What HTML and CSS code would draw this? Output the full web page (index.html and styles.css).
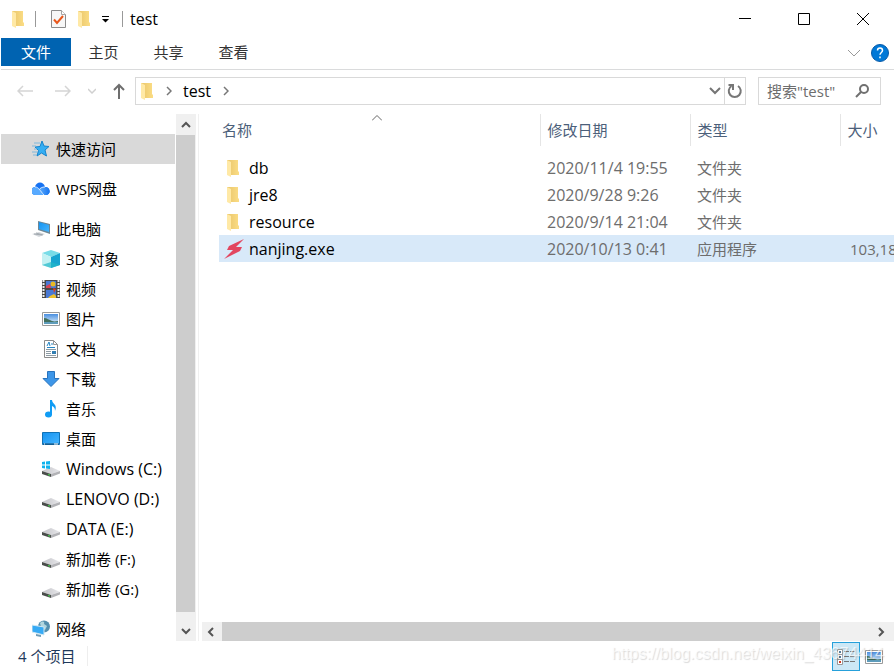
FILE: index.html
```html
<!DOCTYPE html>
<html lang="zh-CN">
<head>
    <meta charset="UTF-8">
    <meta name="viewport" content="width=device-width, initial-scale=1.0">
    <title>test</title>
    <link rel="stylesheet" href="styles.css">
</head>
<body>
    <!-- Shared icons -->
    <svg class="icon-defs" aria-hidden="true">
        <defs>
            <linearGradient id="gFolder" x1="0" x2="1"><stop offset="0" stop-color="#e9c56a"/><stop offset="1" stop-color="#fbdd85"/></linearGradient>
            <linearGradient id="gBlue" x1="0" y1="0" x2="1" y2="1"><stop offset="0" stop-color="#1593f0"/><stop offset="1" stop-color="#45b5ff"/></linearGradient>
            <linearGradient id="gDrive" x1="0" x2="1"><stop offset="0" stop-color="#c4c4c8"/><stop offset="1" stop-color="#e6e6ea"/></linearGradient>
            <linearGradient id="gSky" x1="0" y1="0" x2="0" y2="1"><stop offset="0" stop-color="#4a8fe0"/><stop offset="1" stop-color="#e4f4fc"/></linearGradient>
            <linearGradient id="gCloud" x1="0" y1="0" x2="1" y2="0"><stop offset="0" stop-color="#6bb8ff"/><stop offset="1" stop-color="#1674f0"/></linearGradient>
        </defs>
        <symbol id="folder" viewBox="0 0 14 18">
            <path d="M1 1h11v11l1 1v3H1z" fill="url(#gFolder)"/>
            <path d="M1 1l4 2v15l-4-2z" fill="#ffe9a6"/>
        </symbol>
        <symbol id="drive" viewBox="0 0 18 18">
            <path d="M0 9l9-4 9 4-9 3z" fill="url(#gDrive)"/>
            <path d="M0 9l9 3v3l-9-3z" fill="#4a4d4b"/>
            <path d="M9 12l9-3v2.500l-9 3.500z" fill="#b2b2b6"/>
            <path d="M6 12.500l2 .6" stroke="#45d04e" stroke-width="1.200"/>
        </symbol>
        <symbol id="picture" viewBox="0 0 18 18">
            <path d="M.5 2.500h17v13H.5z" fill="#fff" stroke="#9a9a9a"/>
            <path d="M2 4h14v10H2z" fill="url(#gSky)"/>
            <path d="M2 8c3 0 5 2 8 3s4 0 6 0v1H2z" fill="#42705e"/>
            <path d="M2 12h14v2H2z" fill="#5e9cbb"/>
        </symbol>
    </svg>

    <div class="window">
        <header class="title-bar">
            <svg class="icon-folder"><use href="#folder"/></svg>
            <span class="separator"></span>
            <button class="quick-button check-button" aria-label="属性">
                <svg width="15" height="18" viewBox="0 0 15 18">
                    <path d="M.5.5h10l4 4v13H.5z" fill="#f7f7f7" stroke="#8c8c8c"/>
                    <path d="M10.500.5v4h4" fill="#fff" stroke="#a5a5a5"/>
                    <path d="M3 9.500l3 3.500 6-7" fill="none" stroke="#e8571c" stroke-width="2"/>
                </svg>
            </button>
            <button class="quick-button" aria-label="新建文件夹"><svg class="icon-folder"><use href="#folder"/></svg></button>
            <button class="quick-button" aria-label="自定义快速访问工具栏">
                <svg width="7" height="8" viewBox="0 0 7 8"><path d="M0 1.500h7" stroke="#000"/><path d="M0 4h7L3.500 7.500z"/></svg>
            </button>
            <span class="separator title-separator"></span>
            <h1>test</h1>
            <div class="window-buttons">
                <button aria-label="最小化"><svg width="12" height="12"><path d="M0 5.500h12" stroke="#000"/></svg></button>
                <button aria-label="最大化"><svg width="12" height="12"><path d="M.5.5h11v11H.5z" fill="none" stroke="#000"/></svg></button>
                <button aria-label="关闭"><svg width="12" height="12"><path d="M0 0l12 12M12 0L0 12" stroke="#000"/></svg></button>
            </div>
        </header>

        <div class="ribbon">
            <button class="tab active">文件</button>
            <button class="tab">主页</button>
            <button class="tab">共享</button>
            <button class="tab">查看</button>
            <div class="ribbon-right">
                <button aria-label="展开功能区"><svg width="12" height="8"><path d="M0 1l6 6 6-6" fill="none" stroke="#999"/></svg></button>
                <button aria-label="帮助">
                    <svg width="18" height="18" viewBox="0 0 18 18">
                        <circle cx="9" cy="9" r="8.500" fill="#0078d7" stroke="#075aa8"/>
                        <path d="M6.500 6.500c0-3.300 5-3.300 5 0 0 2-2.500 2-2.500 4.300M9 12.500v1.700" fill="none" stroke="#fff" stroke-width="1.500"/>
                    </svg>
                </button>
            </div>
        </div>

        <div class="address-row">
            <div class="history">
                <button aria-label="后退"><svg width="16" height="12"><path d="M16 6H1M6 1L1 6l5 5" fill="none" stroke="#d5d5d5" stroke-width="1.500"/></svg></button>
                <button aria-label="前进"><svg width="16" height="12"><path d="M0 6h15M10 1l5 5-5 5" fill="none" stroke="#d5d5d5" stroke-width="1.500"/></svg></button>
                <button aria-label="最近浏览的位置"><svg width="8" height="6"><path d="M0 1l4 4 4-4" fill="none" stroke="#d0d0d0" stroke-width="1.500"/></svg></button>
                <button aria-label="上移"><svg width="12" height="16"><path d="M6 16V2M1 7l5-5 5 5" fill="none" stroke="#6e6e6e" stroke-width="2"/></svg></button>
            </div>
            <div class="address-box">
                <svg class="icon-folder"><use href="#folder"/></svg>
                <svg class="crumb-arrow" width="6" height="10"><path d="M1 1l4 4-4 4" fill="none" stroke="#777" stroke-width="1.500"/></svg>
                <a href="#">test</a>
                <svg class="crumb-arrow" width="6" height="10"><path d="M1 1l4 4-4 4" fill="none" stroke="#777" stroke-width="1.500"/></svg>
                <button class="address-drop" aria-label="以前的位置"><svg width="12" height="8"><path d="M1 1l5 5 5-5" fill="none" stroke="#757575" stroke-width="2"/></svg></button>
                <button class="refresh" aria-label="刷新">
                    <svg width="16" height="16" viewBox="0 0 16 16"><path d="M11 3a6 6 0 1 1-6.500 0" fill="none" stroke="#777" stroke-width="2"/><path d="M1.500 2H6v5" fill="none" stroke="#777" stroke-width="2"/></svg>
                </button>
            </div>
            <div class="search-box">
                <input type="search" aria-label="搜索" placeholder='搜索"test"'>
                <svg width="14" height="14"><circle cx="9" cy="5" r="4" fill="none" stroke="#707070" stroke-width="2"/><path d="M6 8l-5 5" stroke="#707070" stroke-width="2"/></svg>
            </div>
        </div>

        <div class="content">
            <nav class="sidebar">
                <a href="#" class="item selected">
                    <svg viewBox="0 0 18 18"><path d="M10 1l2 5 5 .5-4 3.500 1.500 6-5-3L5 16l1.500-5.500L3 7l5-.5z" fill="#35aef3" stroke="#1684cc"/><path d="M2 3h6M0 6h4M2 9h3M0 12h5M1 15h4" stroke="#7fb8dc"/></svg>
                    快速访问
                </a>
                <a href="#" class="item">
                    <svg viewBox="0 0 18 18"><path d="M4 15a4 4 0 0 1-1-8C4 1 12 1 13 7c6 0 6 8 1 8z" fill="#1672f2"/><path d="M5 15c0-5 3-8 8-8 6 0 6 8 1 8z" fill="url(#gCloud)"/><path d="M3 7c4 0 5 4 9 8H4a4 4 0 0 1-1-8z" fill="#58aaff"/><path d="M3 7c4 0 5 4 9 8M7 10c1-2 3-3 6-3" fill="none" stroke="#d4eaff"/></svg>
                    WPS网盘
                </a>
                <a href="#" class="item">
                    <svg viewBox="0 0 18 18"><path d="M6 1l12 3v10L6 10z" fill="#6d8795"/><path d="M7 2l10 3v7L7 9z" fill="url(#gBlue)"/><path d="M0 14l7-2 6 2-6 3z" fill="#d4d8dc"/><path d="M2 14l8 1M4 13l7 2" stroke="#a3aab0"/></svg>
                    此电脑
                </a>
                <a href="#" class="item child">
                    <svg viewBox="0 0 18 18"><path d="M9 0l9 3-9 4-9-4z" fill="#78dce7"/><path d="M0 3l9 4v11l-9-3z" fill="#c2f1f3"/><path d="M9 7l9-4v12l-9 3z" fill="#17a4d0"/><path d="M0 15l9-3 9 3-9 3z" fill="#22b8c8" opacity=".7"/></svg>
                    3D 对象
                </a>
                <a href="#" class="item child">
                    <svg viewBox="0 0 18 18"><path d="M0 0h18v18H0z" fill="#484848"/><path d="M4 1h10v7H4zM4 10h10v8H4z" fill="#4979d4"/><path d="M1.500 0v18M16.500 0v18" stroke="#eee" stroke-width="2" stroke-dasharray="2 1"/><circle cx="11" cy="4" r="2.500" fill="#e9b921"/><path d="M4 6l4-2 1 4H4z" fill="#d94353"/><path d="M11 8l3 1-2 4z" fill="#d83e22"/><path d="M8 16l4-2 2 2v2H6z" fill="#efc12b"/></svg>
                    视频
                </a>
                <a href="#" class="item child"><svg><use href="#picture"/></svg>图片</a>
                <a href="#" class="item child">
                    <svg viewBox="0 0 18 18"><path d="M2.500.5h9l4 4v13h-13z" fill="#fff" stroke="#8b8b8b"/><path d="M11.500.5v4h4" fill="none" stroke="#999"/><path d="M5 6l2-4 1 4M9 4h2M5 7.500h8" fill="none" stroke="#2385c4"/><path d="M4 9.500h10M4 11.500h5M4 13.500h5M4 15.500h10" stroke="#8d9ba4"/><path d="M10 11h4v3h-4z" fill="#327eb2"/></svg>
                    文档
                </a>
                <a href="#" class="item child">
                    <svg viewBox="0 0 18 18"><path d="M5.500 1.500h7v7H17l-8 8-8-8h4.500z" fill="#3d96e8" stroke="#2873bd"/></svg>
                    下载
                </a>
                <a href="#" class="item child">
                    <svg viewBox="0 0 18 18"><ellipse cx="6.500" cy="14.500" rx="3.500" ry="3" fill="#109cf4"/><path d="M8 0h2c0 4 6 4 3 11 0-3-1-4-3-5v9H8z" fill="#109cf4"/></svg>
                    音乐
                </a>
                <a href="#" class="item child">
                    <svg viewBox="0 0 18 18"><path d="M.5 2.500h17v12H.5z" fill="url(#gBlue)" stroke="#1072b6"/><path d="M1 14h16" stroke="#174a70"/><path d="M2 14h1M12 14h4" stroke="#fff"/></svg>
                    桌面
                </a>
                <a href="#" class="item child latin">
                    <svg viewBox="0 0 18 18"><use href="#drive" y="2" width="18" height="18"/><path d="M0 2l3-.5v3H0zM4 1.500L8 1v3.500H4zM0 5.500h3v3L0 8zM4 5.500h4V9l-4-.5z" fill="#10b3ed"/></svg>
                    Windows (C:)
                </a>
                <a href="#" class="item child drive latin"><svg><use href="#drive"/></svg>LENOVO (D:)</a>
                <a href="#" class="item child drive latin"><svg><use href="#drive"/></svg>DATA (E:)</a>
                <a href="#" class="item child drive"><svg><use href="#drive"/></svg>新加卷 (F:)</a>
                <a href="#" class="item child drive"><svg><use href="#drive"/></svg>新加卷 (G:)</a>
                <a href="#" class="item network">
                    <svg viewBox="0 0 18 18"><circle cx="12" cy="6.500" r="6" fill="#548fae"/><path d="M8 3c3-3 5-1 4 1l3 2-2 4-4-3z" fill="#b0d6df"/><path d="M0 5l12 2v8L0 12z" fill="#36aaf5" stroke="#d3e9f4"/><path d="M4 14l5 1v2l-5-1z" fill="#6f9cb6"/></svg>
                    网络
                </a>
            </nav>

            <div class="scroll-vertical">
                <button aria-label="向上滚动"><svg width="10" height="7"><path d="M1 6l4-4 4 4" fill="none" stroke="#555" stroke-width="2"/></svg></button>
                <div class="thumb"></div>
                <button aria-label="向下滚动"><svg width="10" height="7"><path d="M1 1l4 4 4-4" fill="none" stroke="#555" stroke-width="2"/></svg></button>
            </div>

            <main class="file-pane">
                <div class="file-list">
                    <table>
                        <colgroup><col class="col-name"><col class="col-date"><col class="col-type"><col class="col-size"></colgroup>
                        <thead>
                            <tr>
                                <th>名称<svg class="sort-arrow" width="10" height="6"><path d="M0 5.500l5-5 5 5" fill="none" stroke="#666"/></svg></th>
                                <th>修改日期</th>
                                <th>类型</th>
                                <th>大小</th>
                            </tr>
                        </thead>
                        <tbody>
                            <tr><td><div class="name"><svg class="icon-folder"><use href="#folder"/></svg>db</div></td><td class="latin">2020/11/4 19:55</td><td>文件夹</td><td></td></tr>
                            <tr><td><div class="name"><svg class="icon-folder"><use href="#folder"/></svg>jre8</div></td><td class="latin">2020/9/28 9:26</td><td>文件夹</td><td></td></tr>
                            <tr><td><div class="name"><svg class="icon-folder"><use href="#folder"/></svg>resource</div></td><td class="latin">2020/9/14 21:04</td><td>文件夹</td><td></td></tr>
                            <tr class="selected">
                                <td><div class="name"><svg class="icon-exe" viewBox="0 0 20 20"><path d="M20 0L5 7 3 11l6 0L0 20l16-8 2-4-6 0z" fill="#e2465f"/></svg>nanjing.exe</div></td>
                                <td class="latin">2020/10/13 0:41</td><td>应用程序</td><td class="size">103,180 KB</td>
                            </tr>
                        </tbody>
                    </table>
                </div>
                <div class="scroll-horizontal">
                    <button aria-label="向左滚动"><svg width="7" height="10"><path d="M6 1L2 5l4 4" fill="none" stroke="#555" stroke-width="2"/></svg></button>
                    <div class="track"><div class="thumb"></div></div>
                    <button aria-label="向右滚动"><svg width="7" height="10"><path d="M1 1l4 4-4 4" fill="none" stroke="#555" stroke-width="2"/></svg></button>
                </div>
            </main>
        </div>

        <footer class="status-bar">
            <span class="count">4 个项目</span>
            <div class="view-buttons">
                <button class="active" aria-label="详细信息">
                    <svg width="18" height="18"><path d="M.5 1.500h5v5h-5zM.5 6.500h5v5h-5zM.5 11.500h5v5h-5z" fill="#fff" stroke="#999"/><path d="M2 4h2M2 9h2" stroke="#527b99" stroke-width="2"/><path d="M2 14h2" stroke="#d13c22" stroke-width="2"/><path d="M7 3.500h5M13 3.500h5M7 8.500h5M13 8.500h5M7 13.500h5M13 13.500h5" stroke="#777"/></svg>
                </button>
                <button aria-label="大缩略图"><svg width="18" height="18"><use href="#picture"/></svg></button>
            </div>
            <span class="watermark">https://blog.csdn.net/weixin_43674414</span>
        </footer>
    </div>
</body>
</html>
```
FILE: styles.css
```css
* {
    margin: 0;
    padding: 0;
    box-sizing: border-box;
}

body {
    font-family: 'Open Sans', 'Noto Sans CJK SC', sans-serif;
    font-size: 15px;
    line-height: 20px;
    color: #000;
    background: #fff;
}

button {
    display: flex;
    align-items: center;
    justify-content: center;
    border: none;
    background: none;
    font: inherit;
}

a {
    color: inherit;
    text-decoration: none;
}

svg {
    flex-shrink: 0;
}

/* Latin text runs a little larger than the Chinese labels */
.latin,
.name,
h1,
.address-box a {
    font-size: 16px;
}

.icon-defs {
    position: absolute;
    width: 0;
    height: 0;
}

.icon-folder {
    width: 14px;
    height: 18px;
}

.window {
    display: flex;
    flex-direction: column;
    height: 100vh;
    padding-left: 1px;
    overflow: hidden;
}

/* Title bar */
.title-bar {
    display: flex;
    align-items: center;
    height: 38px;
    padding-left: 10px;
}

.separator {
    width: 1px;
    height: 16px;
    margin-left: 10px;
    background: #999;
}

.check-button {
    margin-left: 15px;
}

.quick-button {
    margin-right: 11px;
}

.title-separator {
    margin-left: 2px;
}

h1 {
    margin-left: 7px;
    font-weight: 400;
}

.window-buttons {
    display: flex;
    margin-left: auto;
    padding-right: 2px;
}

.window-buttons button {
    width: 59px;
    height: 38px;
}

/* Ribbon tabs */
.ribbon {
    display: flex;
    height: 32px;
    border-bottom: 1px solid #dadbdc;
}

.tab {
    width: 65px;
    height: 28px;
    color: #333;
}

.tab.active {
    width: 70px;
    background: #0063b1;
    color: #fff;
}

.ribbon-right {
    display: flex;
    align-items: center;
    gap: 11px;
    height: 29px;
    margin-left: auto;
    padding-right: 5px;
}

/* Address and search */
.address-row {
    display: flex;
    height: 44px;
    padding: 7px 13px 9px 0;
}

.history {
    display: flex;
    align-items: center;
    width: 134px;
    padding-left: 16px;
}

.history button {
    margin-right: 22px;
}

.history button:nth-child(2),
.history button:nth-child(3) {
    margin-right: 17px;
}

.history button:last-child {
    margin-right: 0;
}

.address-box {
    display: flex;
    flex: 1;
    align-items: center;
    padding-left: 4px;
    border: 1px solid #d9d9d9;
}

.crumb-arrow {
    margin: 0 11px 0 12px;
}

.address-drop {
    height: 26px;
    margin-left: auto;
    padding: 0 3px;
}

.refresh {
    width: 21px;
    height: 26px;
    border-left: 1px solid #d9d9d9;
}

.search-box {
    display: flex;
    align-items: center;
    width: 123px;
    margin-left: 12px;
    padding: 0 11px 0 8px;
    border: 1px solid #d9d9d9;
}

.search-box input {
    flex: 1;
    min-width: 0;
    border: none;
    outline: none;
    background: none;
    font: inherit;
}

.search-box input::placeholder {
    color: #6d6d6d;
    opacity: 1;
}

/* Navigation tree */
.content {
    display: flex;
    flex: 1;
    min-height: 0;
}

.sidebar {
    width: 174px;
    padding-top: 20px;
    overflow: hidden;
}

.item {
    display: flex;
    align-items: center;
    gap: 6px;
    height: 30px;
    margin-bottom: 10px;
    padding-left: 31px;
    white-space: nowrap;
}

.item svg {
    width: 18px;
    height: 18px;
}

.item.selected {
    background: #d9d9d9;
}

.item.child {
    padding-left: 41px;
}

.item.child,
.item:has(+ .child) {
    margin-bottom: 0;
}

.item.drive svg {
    margin-top: 6px;
}

.item.network {
    margin-top: 10px;
}

/* Scrollbars */
.scroll-vertical {
    display: flex;
    flex-direction: column;
    width: 20px;
    margin-left: 1px;
    background: #f0f0f0;
}

.scroll-vertical button {
    height: 20px;
}

.scroll-vertical .thumb {
    flex: 1;
    margin: 1px 1px 9px 0;
}

.thumb {
    background: #cdcdcd;
}

.scroll-horizontal {
    display: flex;
    height: 19px;
    margin-left: 3px;
    background: #f0f0f0;
}

.scroll-horizontal button {
    width: 20px;
    padding-right: 4px;
}

.scroll-horizontal button:last-child {
    width: 22px;
}

.track {
    flex: 1;
}

.track .thumb {
    width: 92%;
    height: 19px;
}

/* File list */
.file-pane {
    display: flex;
    flex: 1;
    flex-direction: column;
    min-width: 0;
    margin-left: 2px;
    border-left: 1px solid #f0f0f0;
}

.file-list {
    flex: 1;
    padding-left: 20px;
    overflow: hidden;
}

table {
    width: 821px;
    table-layout: fixed;
    border-collapse: collapse;
}

.col-name {
    width: 321px;
}

.col-date,
.col-type {
    width: 150px;
}

th {
    position: relative;
    height: 32px;
    padding-left: 7px;
    border-right: 1px solid #e5e5e5;
    color: #4c607a;
    font-weight: 400;
    text-align: left;
}

th:first-child {
    padding-left: 3px;
}

.sort-arrow {
    position: absolute;
    top: 1px;
    left: 50%;
    margin-left: -7px;
}

tbody::before {
    content: "";
    display: block;
    height: 8px;
}

td {
    height: 27px;
    padding-left: 7px;
    color: #6d6d6d;
    white-space: nowrap;
}

.name {
    display: flex;
    align-items: center;
    color: #000;
}

.name .icon-folder {
    margin-right: 9px;
}

.name .icon-exe {
    width: 20px;
    height: 20px;
    margin-left: -2px;
    margin-right: 5px;
}

tr.selected td {
    background: #d8e9f9;
}

td.size {
    padding-left: 10px;
}

/* Status bar */
.status-bar {
    position: relative;
    display: flex;
    height: 31px;
    padding-left: 17px;
}

.count {
    height: 20px;
    margin-top: 5px;
    padding-right: 12px;
    border-right: 1px solid #eee;
    color: #1e395b;
}

.view-buttons {
    display: flex;
    margin-left: auto;
    padding: 1px 6px 1px 0;
}

.view-buttons button {
    width: 28px;
}

.view-buttons .active {
    border: 1px solid #26a0da;
    background: #cce8f6;
}

.watermark {
    position: absolute;
    top: 3px;
    right: 10px;
    color: rgba(255, 255, 255, 0.7);
    font-family: 'Liberation Sans', sans-serif;
    font-size: 16px;
    text-shadow: 1px 1px 1px rgba(0, 0, 0, 0.15);
}
```
